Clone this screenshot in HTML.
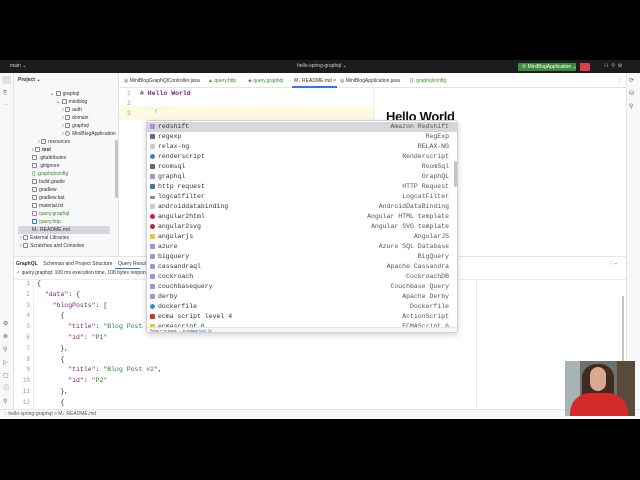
<!DOCTYPE html>
<html><head><meta charset="utf-8"><style>
*{margin:0;padding:0;box-sizing:border-box}
body{width:640px;height:480px;background:#000;position:relative;overflow:hidden;font-family:"Liberation Sans",sans-serif}
.a{position:absolute}
.s{font-size:5px;color:#333;white-space:nowrap}
.m{font-family:"Liberation Mono",monospace;white-space:nowrap}
.ln{color:#999;font-size:6px}
.row{height:10px;line-height:10px;font-size:6.5px;color:#333;position:relative}
.row i{display:inline-block;width:5px;height:5px;border-radius:1px;background:#a98fd6;margin:0 3px 0 3px;vertical-align:-0.5px}
.row b{font-weight:normal;position:absolute;right:8px;color:#555}
.tr{font-size:5px;color:#333;height:8px;line-height:8px;white-space:nowrap}
.ic{width:5px;height:5px;border:1px solid #888;border-radius:1px;display:inline-block;vertical-align:-0.5px;margin-right:2px}
.jl{height:10.8px;line-height:10.8px;font-size:6.5px;color:#222}
.str{color:#2e7d32}
.key{color:#7a1c6c}
</style></head><body>
<div class="a" style="left:0;top:60px;width:640px;height:13px;background:#1b1c1e"></div>
<div class="a s" style="left:10px;top:63px;color:#ccc">main ⌄</div>
<div class="a s" style="left:297px;top:63px;color:#ccc">hello-spring-graphql ⌄</div>
<div class="a s" style="left:518px;top:63px;width:58px;height:8px;background:#3d8b3d;color:#fff;line-height:8px;padding-left:4px;border-radius:1px">⟳ MiniBlogApplication ⌄</div>
<div class="a" style="left:580px;top:63px;width:10px;height:8px;background:#d9414e;border-radius:1px"></div>
<div class="a s" style="left:604px;top:63px;color:#ccc">⚇ &nbsp;⚲ &nbsp;⚙</div>
<div class="a" style="left:0;top:73px;width:640px;height:346px;background:#fff"></div>
<div class="a" style="left:0;top:73px;width:14px;height:336px;background:#f7f8fa;border-right:1px solid #e4e4e4"></div>
<div class="a" style="left:2px;top:76px;width:9px;height:8px;background:#dfe1e5;border-radius:2px"></div>
<div class="a s" style="left:3px;top:90px;color:#666">⎘<br><br>⋯</div>
<div class="a s" style="left:3px;top:318px;color:#666;line-height:13px;font-size:6px">⚙<br>⊗<br>⚲<br>▷<br>▢<br>ⓘ<br>⚲</div>
<div class="a" style="left:14px;top:73px;width:105px;height:183px;background:#f7f8fa;border-right:1px solid #e4e4e4"></div>
<div class="a s" style="left:18px;top:77px;font-weight:bold">Project ⌄</div>
<div class="a" style="left:18px;top:90px">
<div class="tr" style="padding-left:32px">⌄ <span class="ic"></span>graphql</div>
<div class="tr" style="padding-left:38px">⌄ <span class="ic"></span>miniblog</div>
<div class="tr" style="padding-left:44px">› <span class="ic"></span>auth</div>
<div class="tr" style="padding-left:44px">› <span class="ic"></span>domain</div>
<div class="tr" style="padding-left:44px">› <span class="ic"></span>graphql</div>
<div class="tr" style="padding-left:44px">› <span class="ic" style="border-radius:3px"></span>MiniBlogApplication</div>
<div class="tr" style="padding-left:20px">› <span class="ic"></span>resources</div>
<div class="tr" style="padding-left:14px">› <span class="ic"></span><b>test</b></div>
<div class="tr" style="padding-left:14px"><span class="ic"></span>.gitattributes</div>
<div class="tr" style="padding-left:14px"><span class="ic"></span>.gitignore</div>
<div class="tr" style="padding-left:14px;color:#3a8a2a">{} .graphqlconfig</div>
<div class="tr" style="padding-left:14px"><span class="ic"></span>build.gradle</div>
<div class="tr" style="padding-left:14px"><span class="ic"></span>gradlew</div>
<div class="tr" style="padding-left:14px"><span class="ic"></span>gradlew.bat</div>
<div class="tr" style="padding-left:14px"><span class="ic"></span>material.txt</div>
<div class="tr" style="padding-left:14px;color:#3a8a2a"><span class="ic" style="border-color:#b07cc8"></span>query.graphql</div>
<div class="tr" style="padding-left:14px;color:#3a8a2a"><span class="ic" style="border-color:#3a7ca5"></span>query.http</div>
<div class="tr" style="padding-left:14px;background:#d5d7dc;margin-right:6px">M↓ README.md</div>
<div class="tr" style="padding-left:2px">› <span class="ic"></span>External Libraries</div>
<div class="tr" style="padding-left:2px">› <span class="ic"></span>Scratches and Consoles</div>
</div>
<div class="a" style="left:115px;top:140px;width:3px;height:58px;background:#c4c4c4;border-radius:2px"></div>
<div class="a" style="left:119px;top:73px;width:507px;height:15px;border-bottom:1px solid #e4e4e4"></div>
<div class="a s" style="left:124px;top:78px">◎ MiniBlogGraphQlController.java</div>
<div class="a s" style="left:208px;top:78px;color:#3a8a2a">▲ query.http</div>
<div class="a s" style="left:248px;top:78px;color:#3a8a2a">◈ query.graphql</div>
<div class="a s" style="left:294px;top:78px">M↓ README.md ×</div>
<div class="a" style="left:292px;top:86px;width:45px;height:2px;background:#3574f0"></div>
<div class="a s" style="left:340px;top:78px">◎ MiniBlogApplication.java</div>
<div class="a s" style="left:410px;top:78px;color:#3a8a2a">{} .graphqlconfig</div>
<div class="a s" style="left:617px;top:78px">⋮</div>
<div class="a" style="left:626px;top:73px;width:14px;height:336px;background:#f7f8fa;border-left:1px solid #e4e4e4"></div>
<div class="a s" style="left:629px;top:75px;color:#666;line-height:13px;font-size:6px">⟳<br>⛁<br>⚲</div>
<div class="a" style="left:119px;top:106px;width:254px;height:14px;background:#fdfbe3"></div>
<div class="a m ln" style="left:127px;top:89px;line-height:10px">1<br>2<br>3</div>
<div class="a m key" style="left:140px;top:89px;font-size:6.5px;line-height:10px;font-weight:bold"># Hello World</div>
<div class="a m" style="left:140px;top:108px;font-size:6px;color:#999">˙˙˙˙r˙˙˙˙</div>
<div class="a" style="left:373px;top:88px;width:1px;height:168px;background:#ebebeb"></div>
<div class="a" style="left:386px;top:109px;font-size:13px;font-weight:bold;color:#111;letter-spacing:-0.3px">Hello World</div>
<div class="a" style="left:14px;top:256px;width:612px;height:153px;background:#fff;border-top:1px solid #e4e4e4"></div>
<div class="a s" style="left:16px;top:261px"><b>GraphQL</b> &nbsp;&nbsp; Schemas and Project Structure &nbsp;&nbsp; Query Result</div>
<div class="a" style="left:115px;top:268px;width:25px;height:1px;background:#3574f0"></div>
<div class="a s" style="left:16px;top:270px"><span style="color:#3a8a2a">✓</span> query.graphql: 100 ms execution time, 108 bytes response</div>
<div class="a s" style="left:608px;top:261px;color:#666">⋮ –</div>
<div class="a" style="left:14px;top:279px;width:612px;height:1px;background:#ebebeb"></div>
<div class="a" style="left:33px;top:280px;width:1px;height:129px;background:#ebebeb"></div>
<div class="a" style="left:476px;top:280px;width:1px;height:129px;background:#ebebeb"></div>
<div class="a" style="left:622px;top:296px;width:2px;height:68px;background:#c4c4c4"></div>
<div class="a m ln" style="left:20px;top:279px;line-height:10.8px;text-align:right;width:10px">1<br>2<br>3<br>4<br>5<br>6<br>7<br>8<br>9<br>10<br>11<br>12</div>
<div class="a m" style="left:37px;top:279px">
<div class="jl">{</div>
<div class="jl">&nbsp;&nbsp;<span class="key">"data"</span>: {</div>
<div class="jl">&nbsp;&nbsp;&nbsp;&nbsp;<span class="key">"blogPosts"</span>: [</div>
<div class="jl">&nbsp;&nbsp;&nbsp;&nbsp;&nbsp;&nbsp;{</div>
<div class="jl">&nbsp;&nbsp;&nbsp;&nbsp;&nbsp;&nbsp;&nbsp;&nbsp;<span class="key">"title"</span>: <span class="str">"Blog Post #1"</span>,</div>
<div class="jl">&nbsp;&nbsp;&nbsp;&nbsp;&nbsp;&nbsp;&nbsp;&nbsp;<span class="key">"id"</span>: <span class="str">"P1"</span></div>
<div class="jl">&nbsp;&nbsp;&nbsp;&nbsp;&nbsp;&nbsp;},</div>
<div class="jl">&nbsp;&nbsp;&nbsp;&nbsp;&nbsp;&nbsp;{</div>
<div class="jl">&nbsp;&nbsp;&nbsp;&nbsp;&nbsp;&nbsp;&nbsp;&nbsp;<span class="key">"title"</span>: <span class="str">"Blog Post #2"</span>,</div>
<div class="jl">&nbsp;&nbsp;&nbsp;&nbsp;&nbsp;&nbsp;&nbsp;&nbsp;<span class="key">"id"</span>: <span class="str">"P2"</span></div>
<div class="jl">&nbsp;&nbsp;&nbsp;&nbsp;&nbsp;&nbsp;},</div>
<div class="jl">&nbsp;&nbsp;&nbsp;&nbsp;&nbsp;&nbsp;{</div>
</div>
<div class="a" style="left:0;top:409px;width:640px;height:10px;background:#f7f8fa;border-top:1px solid #e4e4e4"></div>
<div class="a s" style="left:4px;top:411px;color:#555">◌ hello-spring-graphql &gt; <span style="color:#3a5ca8">M↓</span> README.md</div>
<div class="a" style="left:146px;top:120px;width:312px;height:213px;background:#fff;border:1px solid #d0d0d0;border-radius:3px;box-shadow:0 2px 6px rgba(0,0,0,.18);overflow:hidden">
<div class="m" style="padding-top:1px">
<div class="row" style="background:#d5d7dc"><i></i>redshift<b>Amazon Redshift</b></div>
<div class="row"><i style="background:#5a6a8a"></i>regexp<b>RegExp</b></div>
<div class="row"><i style="background:#ccc"></i>relax-ng<b>RELAX-NG</b></div>
<div class="row"><i style="background:#2b8fb0;border-radius:3px"></i>renderscript<b>Renderscript</b></div>
<div class="row"><i style="background:#666"></i>roomsql<b>RoomSql</b></div>
<div class="row"><i></i>graphql<b>GraphQL</b></div>
<div class="row"><i style="background:#3a7ca5"></i>http request<b>HTTP Request</b></div>
<div class="row"><i style="background:#888;height:3px"></i>logcatfilter<b>LogcatFilter</b></div>
<div class="row"><i style="background:#ccc"></i>androiddatabinding<b>AndroidDataBinding</b></div>
<div class="row"><i style="background:#c8202a;border-radius:3px"></i>angular2html<b>Angular HTML template</b></div>
<div class="row"><i style="background:#c8202a;border-radius:3px"></i>angular2svg<b>Angular SVG template</b></div>
<div class="row"><i style="background:#e6c830"></i>angularjs<b>AngularJS</b></div>
<div class="row"><i></i>azure<b>Azure SQL Database</b></div>
<div class="row"><i></i>bigquery<b>BigQuery</b></div>
<div class="row"><i></i>cassandraql<b>Apache Cassandra</b></div>
<div class="row"><i></i>cockroach<b>CockroachDB</b></div>
<div class="row"><i></i>couchbasequery<b>Couchbase Query</b></div>
<div class="row"><i></i>derby<b>Apache Derby</b></div>
<div class="row"><i style="background:#2a8fd6;border-radius:3px"></i>dockerfile<b>Dockerfile</b></div>
<div class="row"><i style="background:#b8402a"></i>ecma script level 4<b>ActionScript</b></div>
<div class="row" style="height:5px;overflow:hidden"><i style="background:#e6c830"></i>ecmascript 6<b>ECMAScript 6</b></div>
</div>
<div class="a" style="left:0;top:206px;width:312px;height:7px;background:#f7f8fa;border-top:1px solid #e4e4e4;font-size:3.5px;color:#555;padding-left:3px;line-height:6px">Press ↵ to insert, → to replace <span style="color:#3574f0">Next Tip</span></div>
<div class="a" style="left:307px;top:40px;width:3px;height:26px;background:#c4c4c4;border-radius:2px"></div>
</div>
<div class="a" style="left:565px;top:361px;width:70px;height:55px;background:#6b7070;overflow:hidden">
<div class="a" style="left:0;top:0;width:15px;height:55px;background:#a8b4b4"></div>
<div class="a" style="left:52px;top:0;width:18px;height:55px;background:#5a4a3a"></div>
<div class="a" style="left:17px;top:3px;width:32px;height:40px;background:#3e2c1e;border-radius:14px 14px 6px 6px"></div>
<div class="a" style="left:25px;top:6px;width:16px;height:24px;background:#d8a890;border-radius:8px"></div>
<div class="a" style="left:5px;top:32px;width:58px;height:30px;background:#d42a2a;border-radius:20px 20px 0 0"></div>
</div>
</body></html>
